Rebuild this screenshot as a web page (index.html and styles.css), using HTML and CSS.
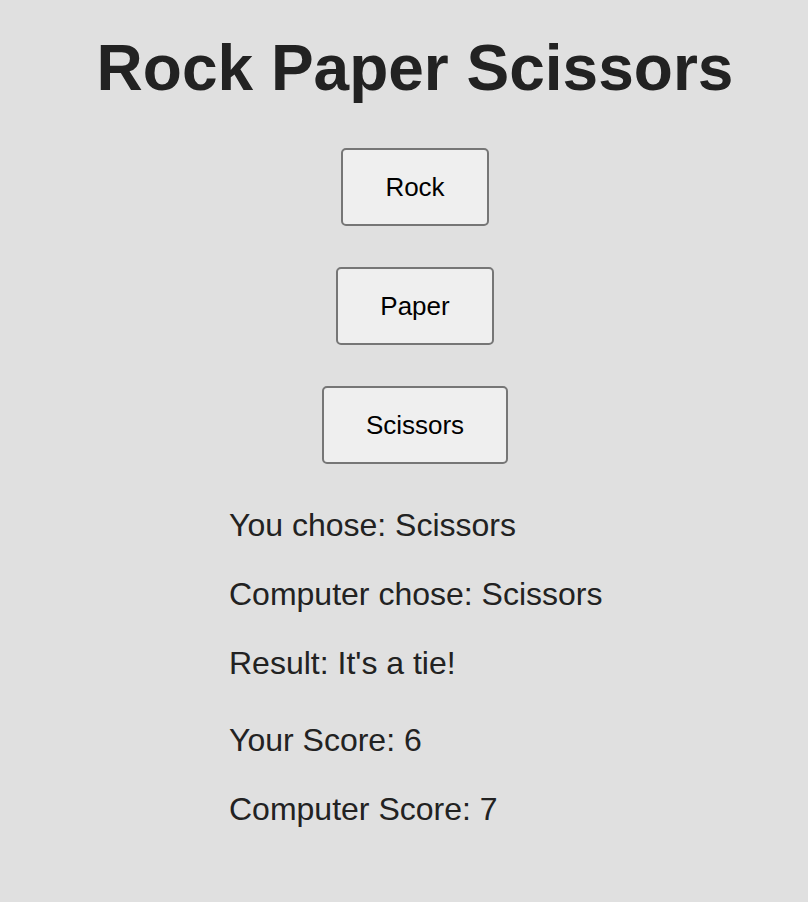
FILE: index.html
```html
<!DOCTYPE html>
<html lang="en">
<head>
<meta charset="utf-8">
<title>Rock Paper Scissors</title>
<link rel="stylesheet" href="styles.css">
</head>
<body>
  <main class="game">
    <h1 class="title">Rock Paper Scissors</h1>
    <div class="choices">
      <button class="choice">Rock</button>
      <button class="choice">Paper</button>
      <button class="choice">Scissors</button>
    </div>
    <div class="info">
      <div class="round">
        <p class="line">You chose: Scissors</p>
        <p class="line">Computer chose: Scissors</p>
        <p class="line">Result: It's a tie!</p>
      </div>
      <div class="scores">
        <p class="line">Your Score: 6</p>
        <p class="line">Computer Score: 7</p>
      </div>
    </div>
  </main>
</body>
</html>
```

FILE: styles.css
```css
html, body {
  margin: 0;
  padding: 0;
}

body {
  background: #e0e0e0;
  color: #222222;
  font-family: "Liberation Sans", Arial, Helvetica, sans-serif;
  padding-left: 22px;
}

.game {
  display: flex;
  flex-direction: column;
  align-items: center;
}

.title {
  margin: 31px 0 0;
  font-size: 64px;
  line-height: 74px;
  font-weight: bold;
  color: #222222;
}

.choices {
  margin-top: 43px;
  display: flex;
  flex-direction: column;
  align-items: center;
  gap: 41px;
}

.choice {
  font-family: "Liberation Sans", Arial, Helvetica, sans-serif;
  font-size: 26px;
  line-height: 30px;
  padding: 22px 42px;
  background: #efefef;
  color: #000000;
  border: 2px solid #767676;
  border-radius: 5px;
}

.info {
  width: 372px;
  margin-top: 43px;
  display: flex;
  flex-direction: column;
  gap: 40px;
}

.round, .scores {
  display: flex;
  flex-direction: column;
  gap: 32px;
}

.line {
  margin: 0;
  font-size: 32px;
  line-height: 37px;
  color: #222222;
  white-space: nowrap;
}
```
